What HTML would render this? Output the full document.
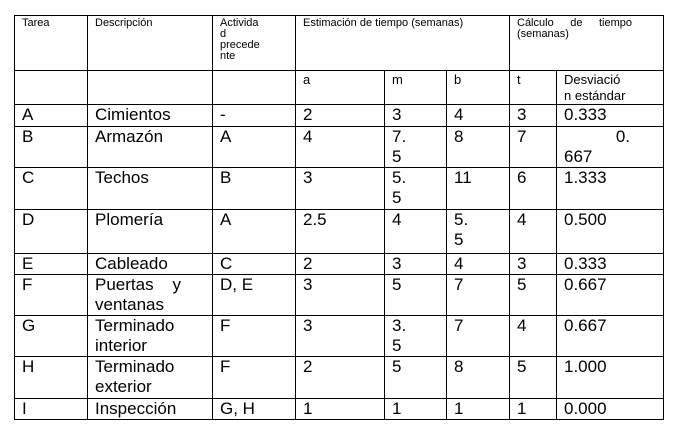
<!DOCTYPE html>
<html><head><meta charset="utf-8"><style>
body{margin:0;background:#fff;width:687px;height:439px;overflow:hidden;font-family:"Liberation Sans",Arial,sans-serif;color:#000}
table{position:absolute;left:14px;top:15px;border-collapse:collapse;table-layout:fixed}
td{border:1px solid #000;vertical-align:top;padding:0 0 0 7px;font-size:17px;line-height:20px;overflow:hidden;box-sizing:border-box;white-space:nowrap}
td.h{font-size:11px;line-height:11px;padding-top:2px}
tr.s td{font-size:13px;line-height:16px;padding-top:1px}
</style></head><body>
<table>
<colgroup><col style="width:73px"><col style="width:125px"><col style="width:83px"><col style="width:89px"><col style="width:62px"><col style="width:63px"><col style="width:47px"><col style="width:107px"></colgroup>
<tr style="height:55px"><td class="h">Tarea</td><td class="h">Descripción</td><td class="h">Activida<br>d<br>precede<br>nte</td><td class="h" colspan="3">Estimación de tiempo (semanas)</td><td class="h" colspan="2"><div style="display:flex;justify-content:space-between;width:115px">Cálculo<span>de</span><span>tiempo</span></div>(semanas)</td></tr>
<tr class="s" style="height:34px"><td></td><td></td><td></td><td>a</td><td>m</td><td>b</td><td>t</td><td>Desviació<br>n estándar</td></tr>
<tr style="height:22px"><td>A</td><td>Cimientos</td><td>-</td><td>2</td><td>3</td><td>4</td><td>3</td><td>0.333</td></tr>
<tr style="height:40px"><td>B</td><td>Armazón</td><td>A</td><td>4</td><td>7.<br>5</td><td>8</td><td>7</td><td><div style="text-align:right;padding-right:33px">0.</div>667</td></tr>
<tr style="height:42px"><td>C</td><td>Techos</td><td>B</td><td>3</td><td>5.<br>5</td><td>11</td><td>6</td><td>1.333</td></tr>
<tr style="height:44px"><td>D</td><td>Plomería</td><td>A</td><td>2.5</td><td>4</td><td>5.<br>5</td><td>4</td><td>0.500</td></tr>
<tr style="height:21px"><td>E</td><td>Cableado</td><td>C</td><td>2</td><td>3</td><td>4</td><td>3</td><td>0.333</td></tr>
<tr style="height:39px"><td>F</td><td><div style="display:flex;justify-content:space-between;width:86px">Puertas<span>y</span></div>ventanas</td><td>D, E</td><td>3</td><td>5</td><td>7</td><td>5</td><td>0.667</td></tr>
<tr style="height:41px"><td>G</td><td>Terminado<br>interior</td><td>F</td><td>3</td><td>3.<br>5</td><td>7</td><td>4</td><td>0.667</td></tr>
<tr style="height:42px"><td>H</td><td>Terminado<br>exterior</td><td>F</td><td>2</td><td>5</td><td>8</td><td>5</td><td>1.000</td></tr>
<tr style="height:20px"><td>I</td><td>Inspección</td><td>G, H</td><td>1</td><td>1</td><td>1</td><td>1</td><td>0.000</td></tr>
</table>
</body></html>
